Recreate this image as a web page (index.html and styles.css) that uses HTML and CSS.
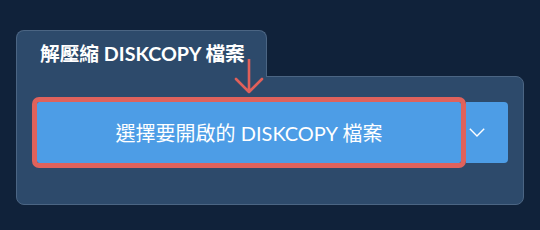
FILE: index.html
```html
<!DOCTYPE html>
<html lang="zh-Hant">
<head>
<meta charset="utf-8">
<title>解壓縮 DISKCOPY 檔案</title>
<link rel="stylesheet" href="styles.css">
</head>
<body>
<div class="wrap">
  <div class="tab"><span class="tab-title">解壓縮 DISKCOPY 檔案</span></div>
  <div class="panel">
    <div class="row">
      <button class="open-btn">選擇要開啟的 DISKCOPY 檔案</button>
      <button class="drop-btn" aria-label="更多">
        <svg width="16" height="9" viewBox="0 0 16 9"><path d="M0.8 0.8 L8 8 L15.2 0.8" fill="none" stroke="#ffffff" stroke-width="1.4"/></svg>
      </button>
    </div>
  </div>
  <svg class="arrow" width="30" height="36" viewBox="0 0 30 36">
    <path d="M15 0 V33 M2 20 L15 33 L28 20" fill="none" stroke="#e0605a" stroke-width="2.6" stroke-linecap="round" stroke-linejoin="round"/>
  </svg>
</div>
</body>
</html>
```

FILE: styles.css
```css
html, body {
  margin: 0;
  padding: 0;
  background: #10223a;
}
body {
  width: 540px;
  height: 230px;
  overflow: hidden;
  font-family: "Lato", "Noto Sans CJK TC", sans-serif;
}
.wrap {
  position: relative;
  padding: 30px 0 0 16px;
}
.tab {
  position: relative;
  z-index: 1;
  box-sizing: border-box;
  width: 251px;
  height: 47px;
  margin-bottom: -1px;
  background: #2d4a6b;
  border: 1px solid #4b6583;
  border-bottom: none;
  border-radius: 8px 8px 0 0;
  padding: 0 0 0 23px;
  display: flex;
  align-items: center;
}
.tab-title {
  color: #ffffff;
  font-weight: 700;
  font-size: 19.7px;
  line-height: 1;
  margin-top: -1px;
  white-space: nowrap;
}
.panel {
  box-sizing: border-box;
  width: 508px;
  height: 129px;
  background: #2d4a6b;
  border: 1px solid #4b6583;
  border-radius: 0 8px 8px 8px;
  padding: 25px 15px 0 20px;
}
.row {
  display: flex;
}
.open-btn {
  width: 424px;
  height: 61px;
  border: none;
  margin: 0;
  background: #4d9de6;
  color: #ffffff;
  font-family: "Lato", "Noto Sans CJK TC", sans-serif;
  font-size: 20px;
  font-weight: 400;
  border-radius: 2px;
  outline: 5px solid #df625c;
  outline-offset: 0;
  padding: 0;
}
.drop-btn {
  width: 42px;
  height: 61px;
  margin: 0 0 0 5px;
  border: none;
  background: #4d9de6;
  border-radius: 0 4px 4px 0;
  display: flex;
  align-items: center;
  padding: 0 0 0 3px;
}
.drop-btn svg {
  display: block;
}
.arrow {
  position: absolute;
  left: 234px;
  top: 59px;
  z-index: 2;
}
```
